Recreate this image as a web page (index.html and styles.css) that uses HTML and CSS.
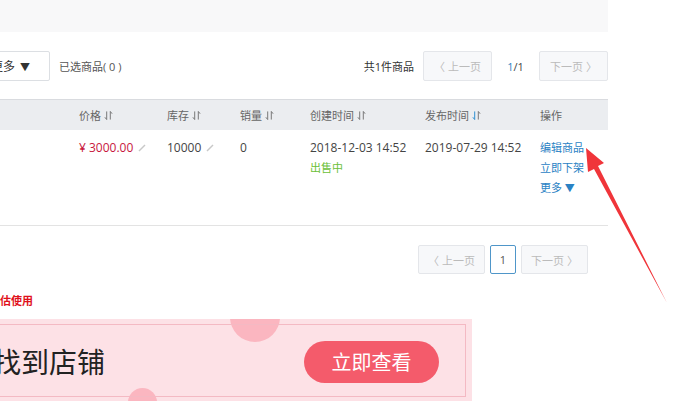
FILE: index.html
```html
<!DOCTYPE html>
<html lang="zh-CN">
<head>
    <meta charset="UTF-8">
    <title>商品管理</title>
    <link rel="stylesheet" href="styles.css">
</head>
<body>

    <div class="page">
        <!-- top filter area (mostly scrolled out) -->
        <div class="topbar"></div>

        <!-- toolbar -->
        <div class="toolbar">
            <div class="toolbar-left">
                <button class="btn more-btn">更多 <span class="caret">▼</span></button>
                <span class="selected">已选商品( 0 )</span>
            </div>
            <div class="toolbar-right">
                <span class="total">共1件商品</span>
                <button class="btn pager-btn">〈 上一页</button>
                <span class="page-num"><b>1</b>/1</span>
                <button class="btn pager-btn">下一页 〉</button>
            </div>
        </div>

        <!-- goods table -->
        <div class="goods-table">
            <div class="thead">
                <div></div>
                <div>价格 <svg class="sort" viewBox="0 0 10 11"><path d="M3 1v9L1 7.5M7 10V1l2 2.5"/></svg></div>
                <div>库存 <svg class="sort" viewBox="0 0 10 11"><path d="M3 1v9L1 7.5M7 10V1l2 2.5"/></svg></div>
                <div>销量 <svg class="sort" viewBox="0 0 10 11"><path d="M3 1v9L1 7.5M7 10V1l2 2.5"/></svg></div>
                <div>创建时间 <svg class="sort" viewBox="0 0 10 11"><path d="M3 1v9L1 7.5M7 10V1l2 2.5"/></svg></div>
                <div>发布时间 <svg class="sort active" viewBox="0 0 10 11"><path class="down" d="M3 1v9L1 7.5"/><path d="M7 10V1l2 2.5"/></svg></div>
                <div>操作</div>
            </div>
            <div class="trow">
                <div></div>
                <div><span class="price">¥ 3000.00</span> <svg class="pen" viewBox="0 0 8 8"><path d="M1 7L7 1"/></svg></div>
                <div>10000 <svg class="pen" viewBox="0 0 8 8"><path d="M1 7L7 1"/></svg></div>
                <div>0</div>
                <div>2018-12-03 14:52<div class="status">出售中</div></div>
                <div>2019-07-29 14:52</div>
                <div class="ops">
                    <a href="#">编辑商品</a>
                    <a href="#">立即下架</a>
                    <a href="#">更多 <span class="caret">▼</span></a>
                </div>
            </div>
        </div>

        <div class="pager-bottom">
            <button class="btn pager-btn">〈 上一页</button>
            <button class="btn page-cur">1</button>
            <button class="btn pager-btn">下一页 〉</button>
        </div>

        <div class="notice">评估使用</div>

        <!-- promo banner -->
        <div class="banner">
            <span class="dot dot-top"></span>
            <span class="dot dot-bottom"></span>
            <div class="banner-inner">
                <span class="banner-title">找到店铺</span>
                <button class="banner-btn">立即查看</button>
            </div>
        </div>
    </div>

    <!-- red annotation arrow -->
    <svg class="arrow" viewBox="0 0 700 415">
        <polygon points="586,148 604,163 598,166 667,303 594,169 588,172"/>
    </svg>

</body>
</html>
```

FILE: styles.css
```css
body {
    margin: 0;
    background: #fff;
    font-family: "Open Sans", "Noto Sans CJK SC", sans-serif;
    font-size: 12px;
    color: #444;
    overflow: hidden;
}

.page {
    width: 608px;
}

.topbar {
    height: 32px;
    background: #f8f8f9;
}

.btn {
    font-family: inherit;
    font-size: 12px;
    border: 1px solid #dcdfe3;
    border-radius: 2px;
    background: #fff;
    color: #444;
    padding: 0;
    cursor: pointer;
}

/* toolbar */
.toolbar {
    display: flex;
    justify-content: space-between;
    align-items: center;
    margin-top: 19px;
    height: 30px;
}

.toolbar-left,
.toolbar-right {
    display: flex;
    align-items: center;
    height: 100%;
}

.more-btn {
    height: 30px;
    width: 64px;
    margin-left: -14px;
    padding-right: 19px;
    text-align: right;
    font-size: 12px;
    color: #333;
}

.more-btn .caret {
    font-size: 10px;
    margin-left: 2px;
}

.selected {
    margin-left: 9px;
    color: #555;
    font-size: 11px;
}

.total {
    color: #333;
    font-size: 11px;
    margin-right: 9px;
}

.pager-btn {
    height: 30px;
    width: 69px;
    background: #f7f8fa;
    border-color: #e4e6ea;
    color: #bbb;
    font-size: 11px;
}

.page-num {
    width: 47px;
    text-align: center;
    font-size: 11px;
    color: #444;
}

.page-num b {
    font-weight: normal;
    color: #2f7fc1;
}

/* table */
.goods-table {
    margin-top: 18px;
}

.thead,
.trow {
    display: grid;
    grid-template-columns: 79px 88px 73px 70px 115px 115px 68px;
}

.thead {
    height: 30px;
    align-items: center;
    background: #ebedf0;
    border-top: 1px solid #d9dbdf;
    color: #666;
    font-size: 11px;
}

.sort {
    width: 9px;
    height: 11px;
    vertical-align: -1px;
    fill: none;
    stroke: #777;
    stroke-width: 1.1;
}

.sort.active .down {
    stroke: #2f8fd0;
}

.trow {
    height: 96px;
    padding-top: 8px;
    box-sizing: border-box;
    border-bottom: 1px solid #e3e3e3;
    line-height: 20px;
    color: #444;
    font-size: 12px;
}

.price {
    color: #c8173d;
}

.pen {
    width: 8px;
    height: 8px;
    margin-left: 2px;
    fill: none;
    stroke: #c8c8c8;
    stroke-width: 1.4;
}

.status {
    color: #6cc03a;
    font-size: 11px;
}

.ops {
    display: flex;
    flex-direction: column;
    font-size: 11px;
}

.ops a {
    color: #2a82c4;
    text-decoration: none;
}

.ops .caret {
    font-size: 10px;
    color: #2a82c4;
}

/* bottom pager */
.pager-bottom {
    display: flex;
    justify-content: flex-end;
    gap: 5px;
    margin-top: 19px;
    padding-right: 20px;
}

.pager-bottom .pager-btn {
    width: 67px;
    height: 29px;
}

.page-cur {
    width: 26px;
    height: 29px;
    border-color: #4f96c9;
    color: #555;
    font-size: 11px;
}

.notice {
    margin-top: 19px;
    margin-left: -11px;
    color: #e0111b;
    font-weight: bold;
    font-size: 11px;
    line-height: 16px;
}

/* banner */
.banner {
    position: relative;
    margin-top: 10px;
    width: 472px;
    height: 82px;
    background: #fde1e6;
    overflow: hidden;
    box-sizing: border-box;
    padding: 5px 6px 4px 0;
}

.banner-inner {
    position: relative;
    height: 100%;
    border: 1px solid #f4b9c3;
    border-left: none;
    box-sizing: border-box;
    display: flex;
    align-items: center;
    justify-content: space-between;
    padding-right: 26px;
}

.dot {
    position: absolute;
    border-radius: 50%;
    background: #fbb6c0;
}

.dot-top {
    width: 50px;
    height: 50px;
    left: 230px;
    top: -27px;
}

.dot-bottom {
    width: 29px;
    height: 29px;
    left: 128px;
    top: 69px;
}

.banner-title {
    margin-left: -7px;
    font-size: 28px;
    color: #222;
    font-family: "Noto Sans CJK SC", sans-serif;
}

.banner-btn {
    width: 135px;
    height: 42px;
    border: none;
    border-radius: 21px;
    background: #f45b6b;
    color: #fff;
    font-family: "Noto Sans CJK SC", sans-serif;
    font-size: 20px;
    margin-top: 2px;
}

.arrow {
    position: absolute;
    left: 0;
    top: 0;
    width: 700px;
    height: 415px;
    pointer-events: none;
}

.arrow polygon {
    fill: #f0353a;
}
```
